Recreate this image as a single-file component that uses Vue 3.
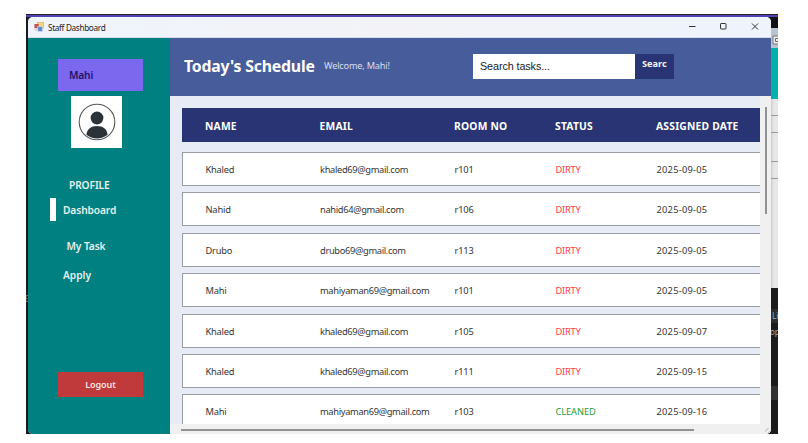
<script setup>
const tasks = [
  ['Khaled', 'khaled69@gmail.com', 'r101', 'DIRTY', '2025-09-05'],
  ['Nahid', 'nahid64@gmail.com', 'r106', 'DIRTY', '2025-09-05'],
  ['Drubo', 'drubo69@gmail.com', 'r113', 'DIRTY', '2025-09-05'],
  ['Mahi', 'mahiyaman69@gmail.com', 'r101', 'DIRTY', '2025-09-05'],
  ['Khaled', 'khaled69@gmail.com', 'r105', 'DIRTY', '2025-09-07'],
  ['Khaled', 'khaled69@gmail.com', 'r111', 'DIRTY', '2025-09-15'],
  ['Mahi', 'mahiyaman69@gmail.com', 'r103', 'CLEANED', '2025-09-16'],
]
</script>

<template>
  <div class="page">
    <div class="desktop">
      <span class="left-letter">E</span>
      <div class="behind">
        <div class="b-dark"></div>
        <div class="b-title">
          <svg width="7" height="10" viewBox="0 0 7 10"><path d="M7 1H2V9H7" fill="#eee" stroke="#777" /><path d="M7 3.5H4.5V6.5H7" fill="none" stroke="#666" /></svg>
        </div>
        <div class="b-teal"></div>
        <div class="b-light"><i></i><i></i><i></i><i></i></div>
        <div class="b-code"><span class="c1">Li</span><span class="c2">op</span></div>
      </div>
      <div class="window">
        <div class="titlebar">
          <svg class="app-icon" width="10" height="10" viewBox="0 0 10 10">
            <rect x="3.5" y="0.5" width="6" height="5.5" fill="#f7d775" stroke="#c9a55a" stroke-width=".6" />
            <rect x="0.4" y="2" width="4.2" height="4.2" fill="#c8504a" />
            <rect x="3.8" y="4.6" width="4.6" height="4.8" fill="#5e8ad6" stroke="#dce6f5" stroke-width=".5" />
            <rect x="0.6" y="6.8" width="2.8" height="1.8" fill="#e6c9b9" />
          </svg>
          <span class="title">Staff Dashboard</span>
          <svg class="controls" width="74" height="10" viewBox="0 0 74 10" fill="none" stroke="#333" stroke-width="1">
            <path d="M1 4.5H7.5" /><rect x="32.5" y="1.5" width="5.5" height="5.5" rx=".6" /><path d="M64 1.5L70 7.5M70 1.5L64 7.5" />
          </svg>
        </div>
        <div class="body">
          <aside class="sidebar">
            <div class="user">Mahi</div>
            <div class="avatar">
              <svg width="38" height="38" viewBox="0 0 38 38">
                <circle cx="19" cy="19" r="17.8" fill="#fff" stroke="#55585b" stroke-width="1.1" />
                <circle cx="19" cy="15" r="6.4" fill="#2c3338" />
                <path d="M8.4 31.8C9 26 13 23 19 23S29 26 29.6 31.8A17 17 0 0 1 8.4 31.8Z" fill="#2c3338" />
              </svg>
            </div>
            <nav>
              <a class="profile">PROFILE</a>
              <a class="dash"><span class="marker"></span>Dashboard</a>
              <a class="task">My Task</a>
              <a class="apply">Apply</a>
            </nav>
            <button class="logout">Logout</button>
          </aside>
          <main class="main">
            <header class="header">
              <h1>Today's Schedule</h1>
              <span class="welcome">Welcome, Mahi!</span>
              <div class="search">Search tasks...</div>
              <div class="search-btn">Searc</div>
            </header>
            <div class="content">
              <div class="table">
                <div class="thead cols">
                  <span>NAME</span><span>EMAIL</span><span>ROOM NO</span><span>STATUS</span><span>ASSIGNED DATE</span>
                </div>
                <div v-for="(t, i) in tasks" :key="i" class="row cols">
                  <span>{{ t[0] }}</span>
                  <span class="email">{{ t[1] }}</span>
                  <span>{{ t[2] }}</span>
                  <span :class="t[3] === 'DIRTY' ? 'dirty' : 'clean'">{{ t[3] }}</span>
                  <span class="date">{{ t[4] }}</span>
                </div>
              </div>
              <div class="vbar"><i></i></div>
              <div class="hbar"><i></i></div>
              <div class="grip"></div>
            </div>
          </main>
        </div>
      </div>
    </div>
  </div>
</template>

<style>
body { background: #fff; overflow: hidden; }
</style>
<style scoped>
* { box-sizing: border-box; }
.page { width: 808px; height: 443px; padding: 14px 30px 9px 26px; background: #fff; font-family: "Noto Sans", "Open Sans", sans-serif; }
.desktop { position: relative; width: 752px; height: 420px; padding: 3px 7px 0 2px; background: linear-gradient(#4f42b4 2px, #181a1c 2px); border-top: 1px solid #222126; overflow: hidden; }
.left-letter { position: absolute; left: -1px; top: 278px; font-size: 8px; color: #777; }
.behind { position: absolute; right: 0; top: 2px; width: 9px; height: 418px; display: flex; flex-direction: column; }
.b-dark { height: 11px; background: #101114; }
.b-title { height: 20px; padding: 7px 0 0 2px; background: #b9c4d3; line-height: 0; }
.b-teal { height: 51px; background: #00b0ad; }
.b-light { height: 189px; background: linear-gradient(90deg, #c5c5c5 1px, #e7e7e7 5px); padding-top: 16px; }
.b-light i { display: block; height: 1px; margin-bottom: 16px; background: #999; }
.b-light i:nth-child(2) { margin-bottom: 28px; }
.b-code { height: 147px; background: linear-gradient(#191b1d 21px, #2c2e30 21px 35px, #191b1d 35px 98px, #303234 98px 112px, #191b1d 112px); font-size: 8px; line-height: 14px; color: #aaa; display: flex; flex-direction: column; padding: 21px 0 0 3px; overflow: hidden; }
.c2 { margin-left: -2px; margin-top: 2px; }
.window { position: relative; width: 743px; height: 417px; margin-top: -1px; border-radius: 5px; overflow: hidden; background: #f0f3fb; }
.titlebar { height: 21px; padding: 0 9px 0 6px; display: flex; align-items: center; background: linear-gradient(90deg, #eff4fc, #f3f3f7 50%, #eef3fc); border-bottom: 1px solid #d5dbe9; }
.title { margin-left: 4px; font-size: 8.2px; color: #1c1c1c; letter-spacing: -.32px; white-space: nowrap; }
.controls { margin-left: auto; }
.body { display: flex; height: 396px; }
.sidebar { width: 142px; flex: none; background: #008080; color: #e5f0ee; display: flex; flex-direction: column; }
.user { width: 85px; height: 32px; margin: 21px 0 0 30px; padding-left: 11px; line-height: 33px; background: #7b68ee; color: #211368; font-size: 10.2px; font-weight: 600; letter-spacing: -.15px; }
.avatar { width: 51px; height: 52px; margin: 5px 0 0 43px; background: #fff; display: flex; align-items: center; justify-content: center; }
nav { display: flex; flex-direction: column; margin-top: 25px; font-size: 10.2px; font-weight: 600; }
nav a { height: 24px; line-height: 24px; display: flex; align-items: center; }
.profile { padding-left: 41px; letter-spacing: -.1px; }
.dash { padding-left: 21.5px; margin-top: 1px; letter-spacing: -.1px; }
.marker { width: 6px; height: 23px; margin-right: 7.5px; margin-top: -2px; background: #fff; }
.task { padding-left: 38.5px; margin-top: 12px; letter-spacing: -.1px; }
.apply { padding-left: 35px; margin-top: 5px; }
.logout { width: 85px; height: 25px; margin: 85px 0 0 30px; padding: 0; border: 0; background: #c0393b; color: #fbe4e4; font: 600 9px "Noto Sans", sans-serif; letter-spacing: -.1px; }
.main { width: 601px; background: #e6ebf5; display: flex; flex-direction: column; }
.header { height: 58px; flex: none; padding-left: 14px; background: #475c9b; color: #fff; display: flex; align-items: flex-start; white-space: nowrap; }
h1 { margin: 15px 0 0; width: 140px; font-size: 15.8px; line-height: 26px; font-weight: 700; letter-spacing: -.19px; }
.welcome { width: 149px; margin-top: 20px; font-size: 9.2px; line-height: 16px; color: #d9dff0; letter-spacing: -.2px; }
.search { width: 162px; height: 25px; margin-top: 16px; padding-left: 7px; background: #fff; color: #222; font: 10.8px/25px "Liberation Sans", Arial, sans-serif; letter-spacing: -.1px; }
.search-btn { width: 39px; height: 25px; margin-top: 16px; padding-left: 7px; background: #283473; color: #f2f4fb; font-size: 9.2px; font-weight: 700; line-height: 19px; }
.content { position: relative; height: 338px; display: grid; grid-template: 328px 10px / 590px 11px; }
.table { padding: 12px 0 0 12px; overflow: hidden; display: flex; flex-direction: column; }
.cols { display: grid; grid-template-columns: 114.5px 134.5px 101px 101px 1fr; align-items: center; flex: none; padding-left: 23px; white-space: nowrap; }
.thead { height: 34px; margin-bottom: 10px; padding-top: 2px; background: #283473; color: #fff; font-size: 10.3px; font-weight: 700; letter-spacing: .22px; }
.row { height: 34px; margin-bottom: 6.4px; padding-left: 22.5px; padding-top: 1px; border: 1px solid #999da5; border-right: 0; background: #fff; color: #353535; font-size: 9.3px; letter-spacing: -.2px; }
.row .email { letter-spacing: -.33px; }
.row .date { letter-spacing: .24px; }
.row .dirty { color: #ff3b3f; letter-spacing: -.25px; }
.row .clean { color: #289b36; letter-spacing: -.1px; }
.vbar, .hbar, .grip { background: #f0f0f0; }
.vbar { padding: 11px 0 0 5px; }
.vbar i { display: block; width: 2px; height: 107px; background: #929292; }
.hbar { padding: 5px 0 0 11px; }
.hbar i { display: block; width: 513px; height: 2px; background: #929292; }
.grip { background: repeating-linear-gradient(135deg, #f0f0f0 0 2px, #ccc 2px 3px) right bottom / 6px 6px no-repeat #f0f0f0; }
</style>
